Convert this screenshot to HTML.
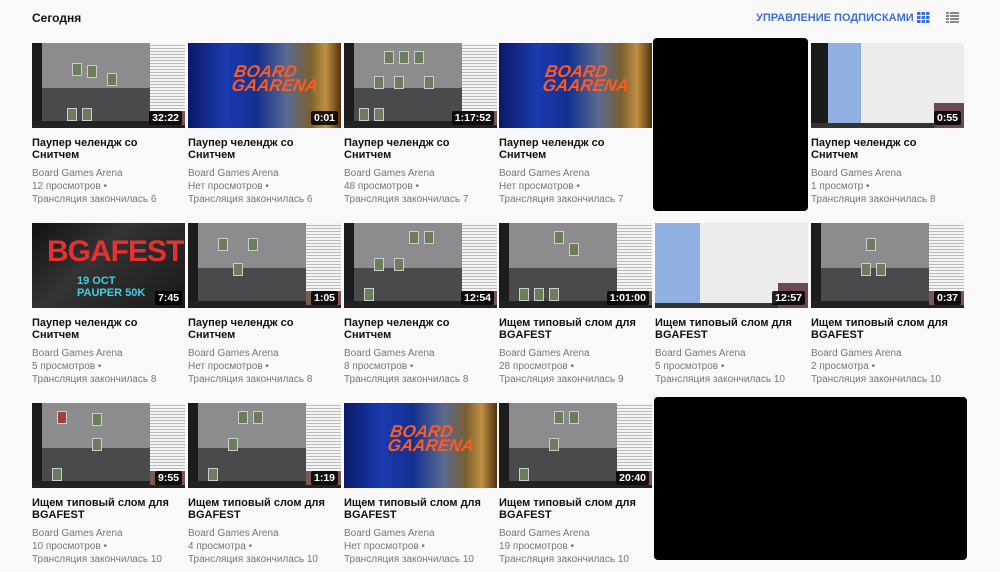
<!DOCTYPE html>
<html><head><meta charset="utf-8"><style>
body{margin:0;background:#f9f9f9;font-family:"Liberation Sans",Arial,sans-serif;width:1000px;height:572px;overflow:hidden;position:relative}
.h{position:absolute;left:32px;top:11px;font-size:12px;color:#111;font-weight:bold}
.m{position:absolute;left:756px;top:12px;font-size:11px;color:#3e6fd6;font-weight:bold;letter-spacing:0}
.c{position:absolute;width:153px}
.t{width:153px;height:85px;position:relative;overflow:hidden;background:#777}
.d{position:absolute;right:3px;bottom:3px;background:rgba(0,0,0,.85);color:#fff;font-size:10.5px;font-weight:bold;padding:1px 3px;border-radius:2px}
.ti{font-size:11px;font-weight:bold;color:#111;margin-top:9px;line-height:12px;height:24px}
.s{font-size:10px;color:#777;line-height:13px;margin-top:6px}
.g .l{position:absolute;left:0;top:0;width:10px;height:85px;background:#1c1c1c}
.g .b{position:absolute;left:10px;top:0;width:108px;height:45px;background:#8c8c8e}
.g .b2{position:absolute;left:10px;top:45px;width:108px;height:33px;background:#4a4a4c}
.g .b3{position:absolute;left:0;top:78px;width:153px;height:7px;background:#222}
.g .r{position:absolute;left:118px;top:0;width:35px;height:70px;background:#f4f4f4;background-image:repeating-linear-gradient(#f4f4f4 0 2px,#bbb 2px 3px)}
.g .w{position:absolute;left:118px;top:68px;width:35px;height:14px;background:#7a5a50}
.g i{position:absolute;width:8px;height:11px;background:#6b7d5a;border:1px solid #ccc}
.a{background:linear-gradient(90deg,#0a1a6a 0%,#1a3ab0 25%,#123090 45%,#5a6a90 65%,#7a6030 80%,#c09040 90%,#503010 100%)}
.a span{position:absolute;left:45px;top:22px;font:italic bold 17px "Liberation Sans";color:#ff5a20;line-height:14px;transform:skewX(-10deg)}
.x{position:absolute;background:#000;border-radius:4px}
.sp{background:linear-gradient(135deg,#111,#333 40%,#1a1a1a)}
</style></head><body>
<div class="h">Сегодня</div>
<div class="m">УПРАВЛЕНИЕ ПОДПИСКАМИ</div>
<svg style="position:absolute;left:917px;top:12px" width="13" height="11"><g fill="#3e6fd6"><rect x="0" y="0" width="3.5" height="3"/><rect x="4.5" y="0" width="3.5" height="3"/><rect x="9" y="0" width="3.5" height="3"/><rect x="0" y="4" width="3.5" height="3"/><rect x="4.5" y="4" width="3.5" height="3"/><rect x="9" y="4" width="3.5" height="3"/><rect x="0" y="8" width="3.5" height="3"/><rect x="4.5" y="8" width="3.5" height="3"/><rect x="9" y="8" width="3.5" height="3"/></g></svg>
<svg style="position:absolute;left:946px;top:12px" width="13" height="11"><g fill="#888"><rect x="0" y="0" width="3" height="2"/><rect x="4" y="0" width="9" height="2"/><rect x="0" y="3" width="3" height="2"/><rect x="4" y="3" width="9" height="2"/><rect x="0" y="6" width="3" height="2"/><rect x="4" y="6" width="9" height="2"/><rect x="0" y="9" width="3" height="2"/><rect x="4" y="9" width="9" height="2"/></g></svg>

<div class="c" style="left:32px;top:43px"><div class="t g"><div class="l"></div><div class="b"></div><div class="b2"></div><div class="b3"></div><div class="r"></div><div class="w"></div><i style="left:40px;top:20px"></i><i style="left:55px;top:22px"></i><i style="left:75px;top:30px"></i><i style="left:35px;top:65px"></i><i style="left:50px;top:65px"></i><div class="d">32:22</div></div><div class="ti">Паупер челендж со Снитчем</div><div class="s">Board Games Arena<br>12 просмотров •<br>Трансляция закончилась 6</div></div>
<div class="c" style="left:188px;top:43px"><div class="t a"><span>BOARD<br>GAARENA</span><div class="d">0:01</div></div><div class="ti">Паупер челендж со Снитчем</div><div class="s">Board Games Arena<br>Нет просмотров •<br>Трансляция закончилась 6</div></div>
<div class="c" style="left:344px;top:43px"><div class="t g"><div class="l"></div><div class="b"></div><div class="b2"></div><div class="b3"></div><div class="r"></div><div class="w"></div><i style="left:40px;top:8px"></i><i style="left:55px;top:8px"></i><i style="left:70px;top:8px"></i><i style="left:30px;top:33px"></i><i style="left:50px;top:33px"></i><i style="left:80px;top:33px"></i><i style="left:15px;top:65px"></i><i style="left:30px;top:65px"></i><div class="d">1:17:52</div></div><div class="ti">Паупер челендж со Снитчем</div><div class="s">Board Games Arena<br>48 просмотров •<br>Трансляция закончилась 7</div></div>
<div class="c" style="left:499px;top:43px"><div class="t a"><span>BOARD<br>GAARENA</span></div><div class="ti">Паупер челендж со Снитчем</div><div class="s">Board Games Arena<br>Нет просмотров •<br>Трансляция закончилась 7</div></div>
<div class="x" style="left:653px;top:38px;width:155px;height:173px"></div>
<div class="c" style="left:811px;top:43px"><div class="t" style="background:linear-gradient(90deg,#1a1a1a 0 17px,#8fb0e0 17px 50px,#ececec 50px)"><div style="position:absolute;left:0;bottom:0;width:153px;height:5px;background:#333"></div><div style="position:absolute;right:0;bottom:0;width:30px;height:25px;background:#6a4a50"></div><div class="d">0:55</div></div><div class="ti">Паупер челендж со Снитчем</div><div class="s">Board Games Arena<br>1 просмотр •<br>Трансляция закончилась 8</div></div>

<div class="c" style="left:32px;top:223px"><div class="t sp"><span style="position:absolute;left:15px;top:12px;font:bold 30px 'Liberation Sans';color:#e83030;letter-spacing:-1px">BGAFEST</span><span style="position:absolute;left:45px;top:52px;font:bold 11px 'Liberation Sans';color:#40d0e0">19 OCT<br>PAUPER 50K</span><div class="d">7:45</div></div><div class="ti">Паупер челендж со Снитчем</div><div class="s">Board Games Arena<br>5 просмотров •<br>Трансляция закончилась 8</div></div>
<div class="c" style="left:188px;top:223px"><div class="t g"><div class="l"></div><div class="b"></div><div class="b2"></div><div class="b3"></div><div class="r"></div><div class="w"></div><i style="left:30px;top:15px"></i><i style="left:60px;top:15px"></i><i style="left:45px;top:40px"></i><div class="d">1:05</div></div><div class="ti">Паупер челендж со Снитчем</div><div class="s">Board Games Arena<br>Нет просмотров •<br>Трансляция закончилась 8</div></div>
<div class="c" style="left:344px;top:223px"><div class="t g"><div class="l"></div><div class="b"></div><div class="b2"></div><div class="b3"></div><div class="r"></div><div class="w"></div><i style="left:65px;top:8px"></i><i style="left:80px;top:8px"></i><i style="left:30px;top:35px"></i><i style="left:50px;top:35px"></i><i style="left:20px;top:65px"></i><div class="d">12:54</div></div><div class="ti">Паупер челендж со Снитчем</div><div class="s">Board Games Arena<br>8 просмотров •<br>Трансляция закончилась 8</div></div>
<div class="c" style="left:499px;top:223px"><div class="t g"><div class="l"></div><div class="b"></div><div class="b2"></div><div class="b3"></div><div class="r"></div><div class="w"></div><i style="left:55px;top:8px"></i><i style="left:70px;top:20px"></i><i style="left:20px;top:65px"></i><i style="left:35px;top:65px"></i><i style="left:50px;top:65px"></i><div class="d">1:01:00</div></div><div class="ti">Ищем типовый слом для BGAFEST</div><div class="s">Board Games Arena<br>28 просмотров •<br>Трансляция закончилась 9</div></div>
<div class="c" style="left:655px;top:223px"><div class="t" style="background:linear-gradient(90deg,#8fb0e0 0 45px,#ececec 45px)"><div style="position:absolute;left:0;bottom:0;width:153px;height:5px;background:#333"></div><div style="position:absolute;right:0;bottom:0;width:30px;height:25px;background:#6a4a50"></div><div class="d">12:57</div></div><div class="ti">Ищем типовый слом для BGAFEST</div><div class="s">Board Games Arena<br>5 просмотров •<br>Трансляция закончилась 10</div></div>
<div class="c" style="left:811px;top:223px"><div class="t g"><div class="l"></div><div class="b"></div><div class="b2"></div><div class="b3"></div><div class="r"></div><div class="w"></div><i style="left:55px;top:15px"></i><i style="left:50px;top:40px"></i><i style="left:65px;top:40px"></i><div class="d">0:37</div></div><div class="ti">Ищем типовый слом для BGAFEST</div><div class="s">Board Games Arena<br>2 просмотра •<br>Трансляция закончилась 10</div></div>

<div class="c" style="left:32px;top:403px"><div class="t g"><div class="l"></div><div class="b"></div><div class="b2"></div><div class="b3"></div><div class="r"></div><div class="w"></div><i style="left:25px;top:8px;background:#a04040"></i><i style="left:60px;top:10px"></i><i style="left:60px;top:35px"></i><i style="left:20px;top:65px"></i><div class="d">9:55</div></div><div class="ti">Ищем типовый слом для BGAFEST</div><div class="s">Board Games Arena<br>10 просмотров •<br>Трансляция закончилась 10</div></div>
<div class="c" style="left:188px;top:403px"><div class="t g"><div class="l"></div><div class="b"></div><div class="b2"></div><div class="b3"></div><div class="r"></div><div class="w"></div><i style="left:50px;top:8px"></i><i style="left:65px;top:8px"></i><i style="left:40px;top:35px"></i><i style="left:20px;top:65px"></i><div class="d">1:19</div></div><div class="ti">Ищем типовый слом для BGAFEST</div><div class="s">Board Games Arena<br>4 просмотра •<br>Трансляция закончилась 10</div></div>
<div class="c" style="left:344px;top:403px"><div class="t a"><span>BOARD<br>GAARENA</span></div><div class="ti">Ищем типовый слом для BGAFEST</div><div class="s">Board Games Arena<br>Нет просмотров •<br>Трансляция закончилась 10</div></div>
<div class="c" style="left:499px;top:403px"><div class="t g"><div class="l"></div><div class="b"></div><div class="b2"></div><div class="b3"></div><div class="r"></div><div class="w"></div><i style="left:55px;top:8px"></i><i style="left:70px;top:8px"></i><i style="left:50px;top:35px"></i><i style="left:20px;top:65px"></i><div class="d">20:40</div></div><div class="ti">Ищем типовый слом для BGAFEST</div><div class="s">Board Games Arena<br>19 просмотров •<br>Трансляция закончилась 10</div></div>
<div class="x" style="left:654px;top:397px;width:313px;height:163px"></div>
</body></html>
